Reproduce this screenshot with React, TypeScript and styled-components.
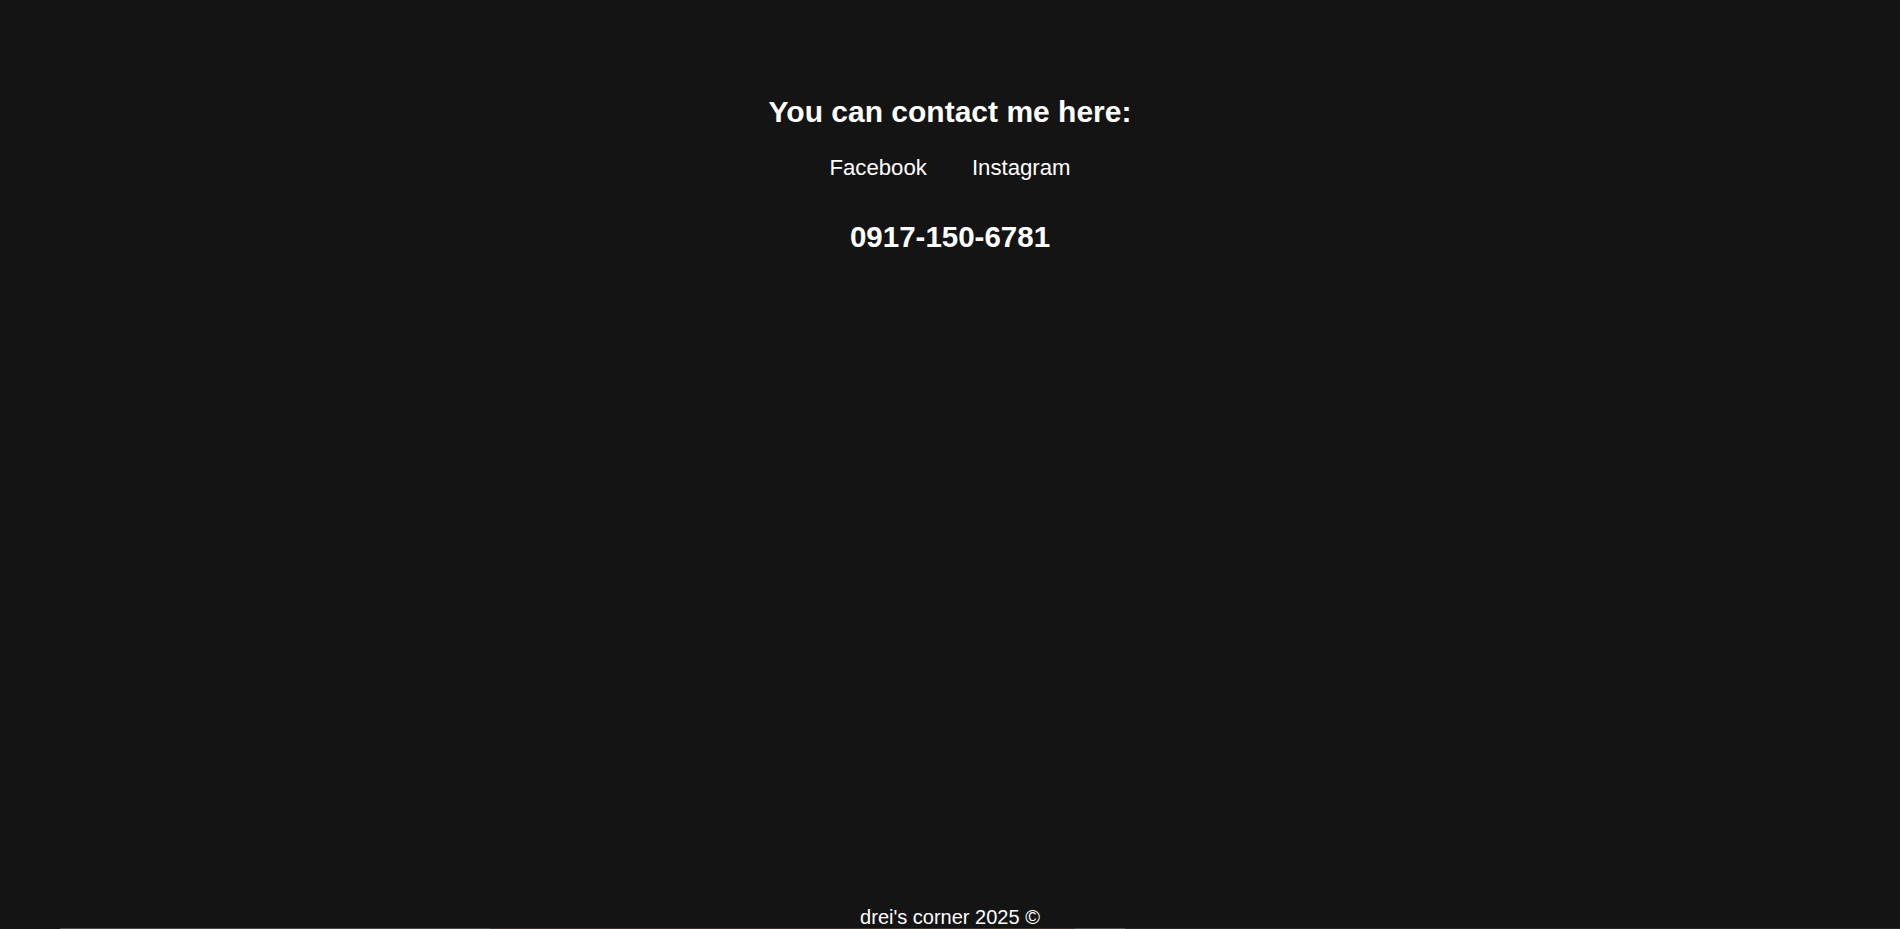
import React from "react";
import styled, { createGlobalStyle } from "styled-components";

const Global = createGlobalStyle`
  html, body {
    margin: 0;
    padding: 0;
    background: #141414;
  }
  body {
    font-family: "Liberation Sans", Arial, Helvetica, sans-serif;
    color: #ffffff;
  }
`;

const Page = styled.div`
  min-height: 928px;
  display: flex;
  flex-direction: column;
  align-items: center;
  box-sizing: border-box;
  padding-top: 95px;
`;

const Contact = styled.section`
  display: flex;
  flex-direction: column;
  align-items: center;
`;

const Heading = styled.h2`
  margin: 0;
  font-size: 30px;
  line-height: 34px;
  font-weight: 700;
  color: #ffffff;
`;

const Links = styled.nav`
  display: flex;
  gap: 45px;
  margin-top: 26px;
`;

const LinkItem = styled.a`
  font-size: 22.2px;
  line-height: 25px;
  color: #ffffff;
  text-decoration: none;
`;

const Phone = styled.h2`
  margin: 40px 0 0;
  font-size: 29.5px;
  line-height: 34px;
  font-weight: 700;
  color: #ffffff;
`;

const Spacer = styled.div`
  flex: 1;
`;

const Footer = styled.footer`
  font-size: 20px;
  line-height: 21px;
  color: #ffffff;
`;

const Strip = styled.div`
  display: flex;
  height: 240px;
`;

const Tile = styled.div<{ $w: number; $c: string }>`
  width: ${(p) => p.$w}px;
  background: ${(p) => p.$c};
  flex: none;
`;

export default function App() {
  return (
    <>
      <Global />
      <Page>
        <Contact>
          <Heading>You can contact me here:</Heading>
          <Links>
            <LinkItem href="#">Facebook</LinkItem>
            <LinkItem href="#">Instagram</LinkItem>
          </Links>
          <Phone>0917-150-6781</Phone>
        </Contact>
        <Spacer />
        <Footer>drei's corner 2025 ©</Footer>
      </Page>
      <Strip>
        <Tile $w={60} $c="#141414" />
        <Tile $w={430} $c="#4a4a4a" />
        <Tile $w={585} $c="#3b3128" />
        <Tile $w={50} $c="#4d4d4d" />
        <Tile $w={775} $c="#262626" />
      </Strip>
    </>
  );
}
